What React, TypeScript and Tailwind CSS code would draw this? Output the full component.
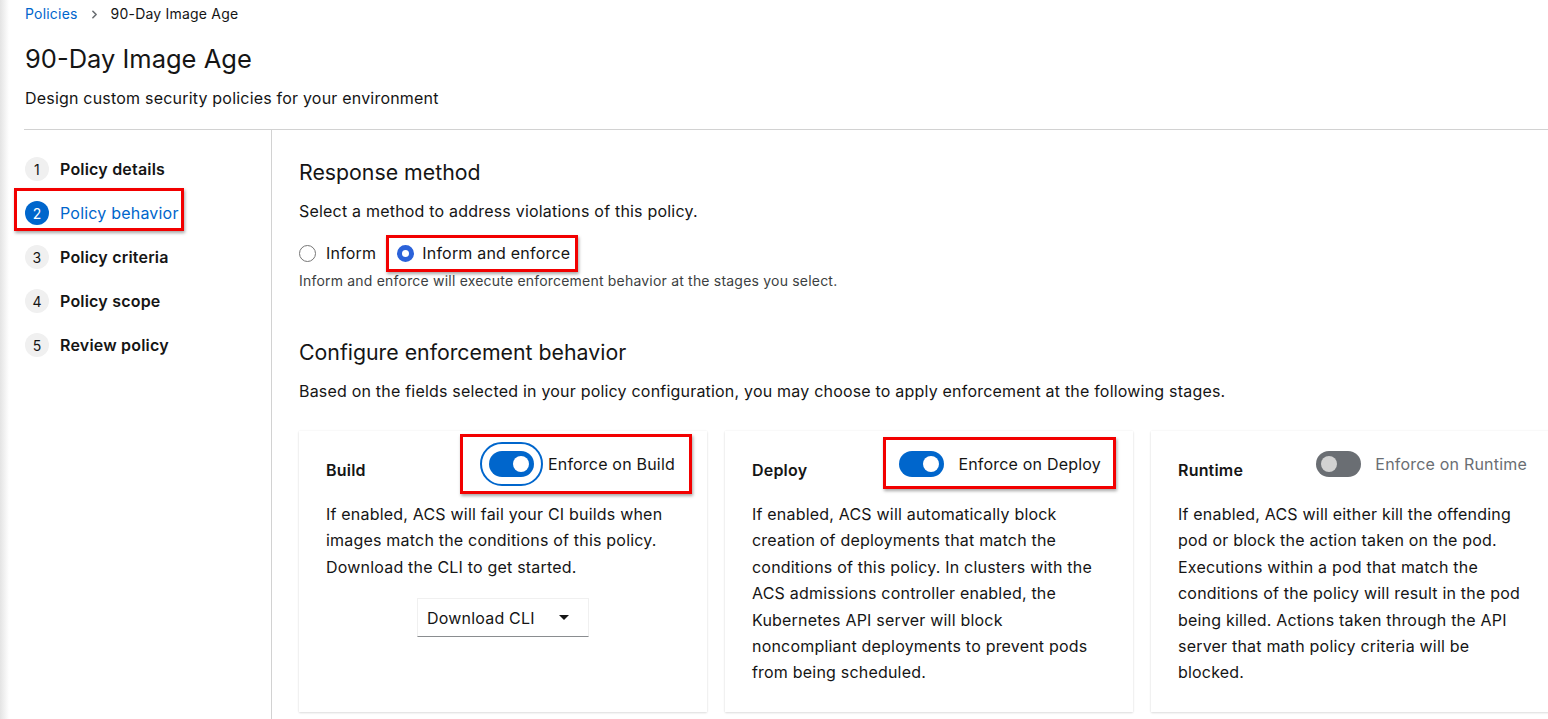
import { ChevronRight } from 'lucide-react';

const navItems = [
  { n: 1, label: 'Policy details' },
  { n: 2, label: 'Policy behavior', active: true },
  { n: 3, label: 'Policy criteria' },
  { n: 4, label: 'Policy scope' },
  { n: 5, label: 'Review policy' },
];

function Toggle({ on, focus }: { on: boolean; focus?: boolean }) {
  return (
    <span
      className={`relative inline-flex shrink-0 rounded-full ${
        focus ? 'outline-2 outline-[#0066cc] outline-offset-[7px]' : ''
      }`}
    >
      <span
        className={`flex h-[26px] w-[45px] items-center rounded-full px-[5px] ${
          on ? 'justify-end bg-[#0066cc]' : 'justify-start bg-[#6a6e73]'
        }`}
      >
        <span className={`h-[16px] w-[16px] rounded-full ${on ? 'bg-white' : 'bg-[#d2d2d2]'}`} />
      </span>
    </span>
  );
}

function RedBox({ className }: { className: string }) {
  return (
    <span
      className={`pointer-events-none absolute border-[3px] border-[#f20000] shadow-[1px_2px_3px_rgba(0,0,0,0.35)] ${className}`}
    />
  );
}

function Card({
  title,
  label,
  on,
  focus,
  disabled,
  box,
  children,
}: {
  title: string;
  label: string;
  on: boolean;
  focus?: boolean;
  disabled?: boolean;
  box?: string;
  children: React.ReactNode;
}) {
  return (
    <div className="h-[281px] w-[408px] shrink-0 bg-white px-[27px] pt-[20px] shadow-[0_1px_2px_rgba(3,3,3,0.12),0_0_2px_rgba(3,3,3,0.06)]">
      <div className="flex items-start justify-between pr-[5px]">
        <h3 className="mt-[7px] text-[16px] font-semibold leading-[24px]">{title}</h3>
        <div className="relative flex items-center gap-[14px]">
          {box && <RedBox className={box} />}
          <Toggle on={on} focus={focus} />
          <span className={`text-[16px] leading-[26px] ${disabled ? 'text-[#6a6e73]' : 'text-[#151515]'}`}>
            {label}
          </span>
        </div>
      </div>
      <div className="mt-[19px] text-[16px] leading-[26.4px]">{children}</div>
    </div>
  );
}

export default function App() {
  return (
    <div className="relative h-[719px] w-[1548px] overflow-hidden bg-white font-['Inter',sans-serif] tracking-[0.2px] text-[#151515]">
      {/* left edge shade */}
      <div className="absolute inset-y-0 left-0 w-[9px] bg-gradient-to-r from-[#e4e4e4] to-white" />

      <div className="relative pl-[25px] pt-[4px]">
        <nav className="flex items-center text-[14px] leading-[20px]">
          <span className="text-[#0066cc]">Policies</span>
          <ChevronRight size={13} strokeWidth={3} className="mx-[10px] text-[#6a6e73]" />
          <span>90-Day Image Age</span>
        </nav>
        <h1 className="mt-[19px] text-[25.5px] leading-[32px] tracking-normal">90-Day Image Age</h1>
        <p className="mt-[11px] text-[16px] leading-[24px]">Design custom security policies for your environment</p>
      </div>

      <div className="relative ml-[24px] mt-[19px] flex h-[600px] border-t border-[#d2d2d2]">
        <aside className="w-[248px] shrink-0 border-r border-[#d2d2d2] pt-[17px]">
          {navItems.map((item) => (
            <div key={item.n} className="relative flex h-[44px] items-center gap-[11px] pl-[1px]">
              {item.active && <RedBox className="-top-[3px] left-[-10px] h-[43px] w-[170px]" />}
              <span
                className={`flex h-[24px] w-[24px] items-center justify-center rounded-full text-[14px] ${
                  item.active ? 'bg-[#0066cc] text-white' : 'bg-[#f0f0f0] text-[#151515]'
                }`}
              >
                {item.n}
              </span>
              <span
                className={`text-[16px] ${item.active ? 'text-[#0066cc]' : 'font-semibold text-[#151515]'}`}
              >
                {item.label}
              </span>
            </div>
          ))}
        </aside>

        <main className="pl-[27px] pt-[28px]">
          <h2 className="text-[21.3px] leading-[28px] tracking-normal">Response method</h2>
          <p className="mt-[13px] text-[16px] leading-[24px]">Select a method to address violations of this policy.</p>
          <div className="mt-[18px] flex h-[24px] items-center text-[16px]">
            <span className="h-[17px] w-[17px] rounded-full border border-[#767676] bg-white" />
            <span className="ml-[10px]">Inform</span>
            <span className="relative ml-[21px] flex items-center">
              <RedBox className="-left-[11px] -top-[6px] h-[37px] w-[192px]" />
              <span className="h-[17px] w-[17px] rounded-full border-[5px] border-[#2b62d9] bg-white" />
              <span className="ml-[8px]">Inform and enforce</span>
            </span>
          </div>
          <p className="mt-[6px] text-[14px] leading-[20px] text-[#3c3f42]">
            Inform and enforce will execute enforcement behavior at the stages you select.
          </p>

          <h2 className="mt-[47px] text-[21.3px] leading-[28px] tracking-normal">Configure enforcement behavior</h2>
          <p className="mt-[13px] text-[16px] leading-[24px]">
            Based on the fields selected in your policy configuration, you may choose to apply enforcement at the
            following stages.
          </p>

          <div className="mt-[28px] flex gap-[18px]">
            <Card
              title="Build"
              label="Enforce on Build"
              on
              focus
              box="-left-[29px] -top-[17px] h-[60px] w-[232px]"
            >
              <p className="w-[348px]">
                If enabled, ACS will fail your CI builds when images match the conditions of this policy. Download
                the CLI to get started.
              </p>
              <div className="mt-[18px] flex justify-center">
                <div className="flex h-[39px] w-[172px] items-center justify-between border-t border-l border-r border-[#f0f0f0] border-b-[#8a8d90] border-b pl-[9px] pr-[19px]">
                  <span>Download CLI</span>
                  <span className="h-0 w-0 border-x-[5px] border-t-[5px] border-x-transparent border-t-[#151515]" />
                </div>
              </div>
            </Card>
            <Card title="Deploy" label="Enforce on Deploy" on box="-left-[16px] -top-[14px] h-[52px] w-[233px]">
              <p className="w-[348px]">
                If enabled, ACS will automatically block creation of deployments that match the conditions of this
                policy. In clusters with the ACS admissions controller enabled, the Kubernetes API server will block
                noncompliant deployments to prevent pods from being scheduled.
              </p>
            </Card>
            <Card title="Runtime" label="Enforce on Runtime" on={false} disabled>
              <p className="w-[348px]">
                If enabled, ACS will either kill the offending pod or block the action taken on the pod. Executions
                within a pod that match the conditions of the policy will result in the pod being killed. Actions
                taken through the API server that math policy criteria will be blocked.
              </p>
            </Card>
          </div>
        </main>
      </div>
    </div>
  );
}
